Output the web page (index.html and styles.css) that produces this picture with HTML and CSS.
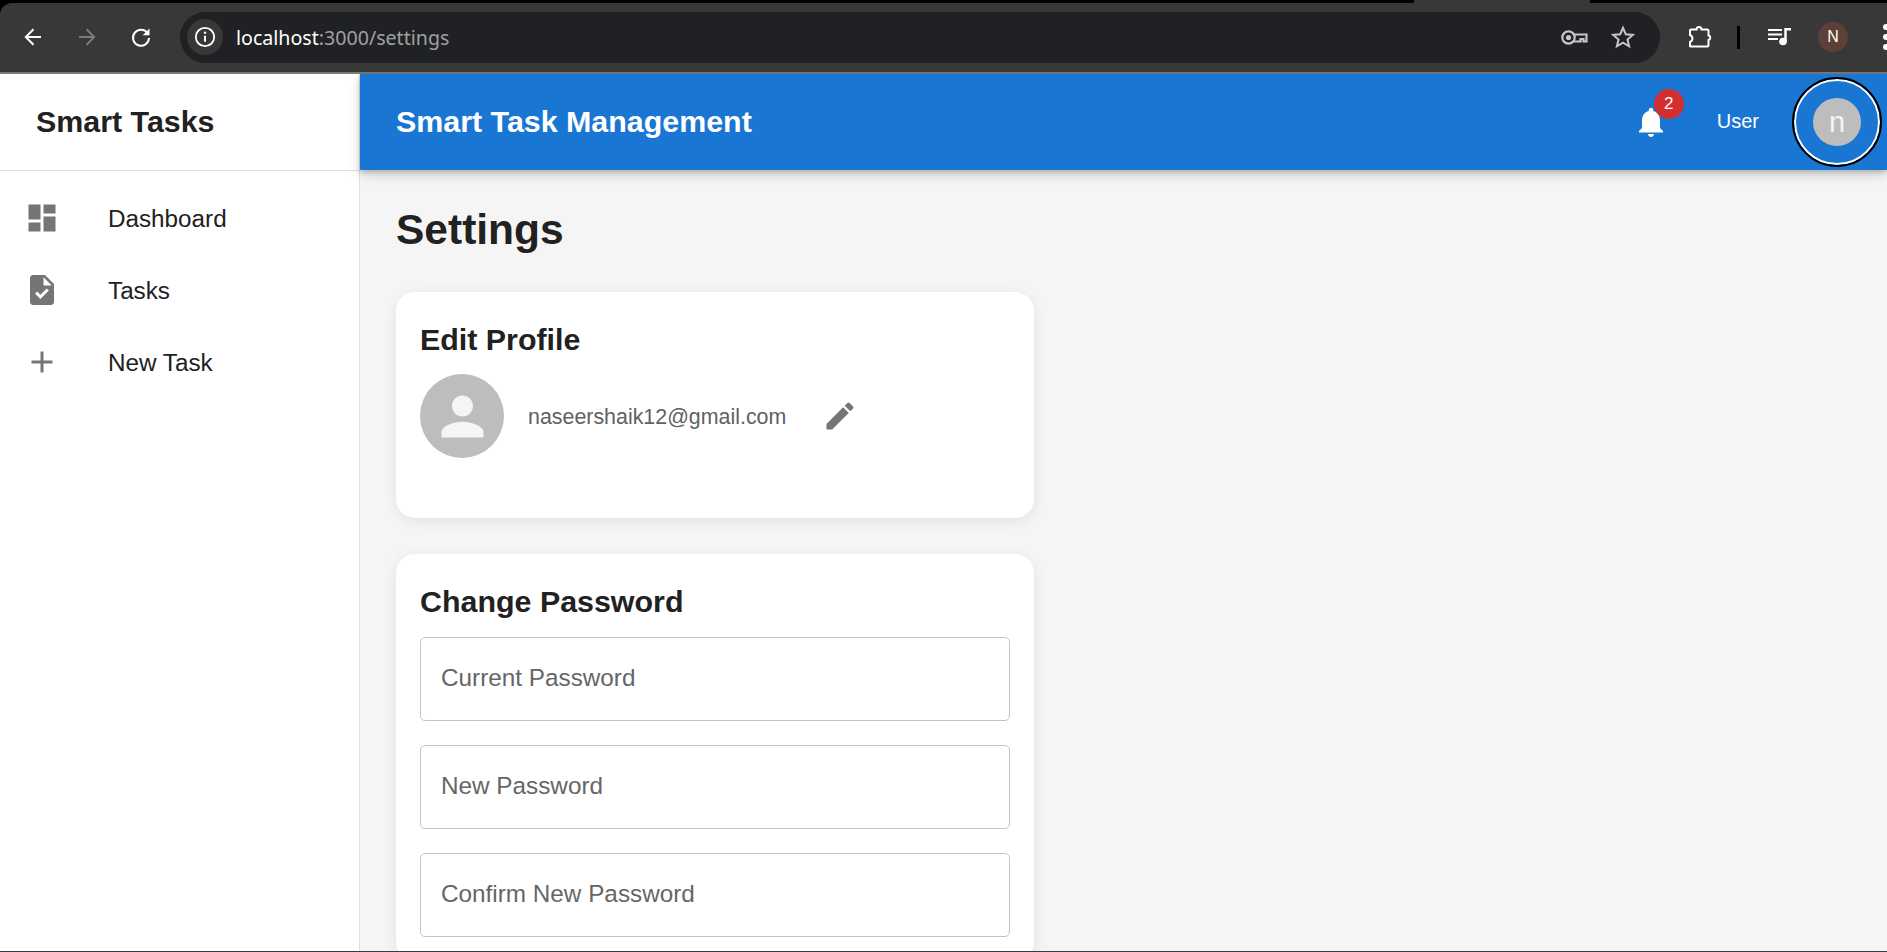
FILE: index.html
```html
<!DOCTYPE html>
<html lang="en">
<head>
  <meta charset="UTF-8">
  <title>Settings - Smart Tasks</title>
  <meta name="viewport" content="width=device-width, initial-scale=1.0">
  <link rel="stylesheet" href="styles.css">
</head>
<body>
  <div class="tab-strip"><div class="tab-gap"></div></div>

  <div class="toolbar">
    <svg class="nav-icon" width="24" height="24" viewBox="0 0 24 24"><path d="M20 12H5M12.5 4.2 4.8 12l7.700 7.800" fill="none" stroke="#fff" stroke-width="2"/></svg>
    <svg class="nav-icon" width="24" height="24" viewBox="0 0 24 24"><path d="M4 12h15M11.500 4.200l7.700 7.800-7.700 7.800" fill="none" stroke="#7b7b7b" stroke-width="2"/></svg>
    <svg class="nav-icon" width="24" height="24" viewBox="0 0 24 24"><path d="M18.600 8.200A8 8 0 1 0 20 13" fill="none" stroke="#fff" stroke-width="2"/><path d="M20.500 3.500v6.800h-6.800z" fill="#fff"/></svg>

    <div class="url-bar">
      <div class="site-chip">
        <svg width="22" height="22" viewBox="0 0 22 22"><circle cx="11" cy="11" r="9.200" fill="none" stroke="#fff" stroke-width="1.800"/><path d="M11 9.800v6" stroke="#fff" stroke-width="2"/><circle cx="11" cy="6.800" r="1.200" fill="#fff"/></svg>
      </div>
      <span class="url-host">localhost</span><span class="url-path">:3000/settings</span>
      <svg class="key-icon" width="27" height="15" viewBox="0 0 27 15"><path d="M12.600 4.500H25.500v7h-3V9h-3v2.500h-7" fill="none" stroke="#c7c7c7" stroke-width="2.200"/><circle cx="7.500" cy="7.500" r="6.200" fill="#202124" stroke="#c7c7c7" stroke-width="2.200"/><circle cx="7.500" cy="7.500" r="2.600" fill="#c7c7c7"/></svg>
      <svg class="star-icon" width="24" height="24" viewBox="0 0 24 24"><path d="M12 2.800l2.800 6.400 7 .7-5.300 4.600 1.600 6.800-6.100-3.600-6.100 3.600 1.600-6.800-5.300-4.600 7-.7z" fill="none" stroke="#c7c7c7" stroke-width="2"/></svg>
    </div>

    <svg class="ext-icon" width="24" height="24" viewBox="0 0 24 24"><path d="M3 4.500h5.500a2.500 2.500 0 0 1 5 0H19a1.500 1.500 0 0 1 1.500 1.500v4.500a2.300 2.300 0 0 1 0 4.500v5a1.500 1.500 0 0 1-1.500 1.500H3.500A1.500 1.500 0 0 1 2 21v-4a4 4 0 0 0 2.500-3.500A4 4 0 0 0 2 10V5.500A1 1 0 0 1 3 4.500z" fill="none" stroke="#fff" stroke-width="2"/></svg>
    <div class="tool-divider"></div>
    <svg class="queue-icon" width="24" height="18" viewBox="0 0 24 18"><path d="M0 2h14M0 6.500h14M0 11h10" stroke="#fff" stroke-width="2"/><path d="M17.500 14V1.200H23" fill="none" stroke="#fff" stroke-width="2.500"/><circle cx="15" cy="13.500" r="3.800" fill="#fff"/></svg>
    <div class="profile-chip">N</div>
    <div class="tool-dots"><i></i><i></i><i></i></div>
  </div>

  <div class="app">
    <aside class="sidebar">
      <div class="sidebar-head">Smart Tasks</div>
      <nav class="side-nav">
        <a class="side-link">
          <svg width="36" height="36" viewBox="0 0 24 24"><path d="M3 13h8V3H3v10zm0 8h8v-6H3v6zm10 0h8V11h-8v10zm0-18v6h8V3h-8z"/></svg>
          <span>Dashboard</span>
        </a>
        <a class="side-link">
          <svg width="36" height="36" viewBox="0 0 24 24"><path d="M14 2H6c-1.100 0-2 .9-2 2v16c0 1.100.9 2 2 2h12c1.100 0 2-.9 2-2V8l-6-6zm-3.060 16L7.400 14.460l1.410-1.410 2.120 2.120 4.240-4.240 1.410 1.410L10.940 18zM13 9V3.500L18.500 9H13z"/></svg>
          <span>Tasks</span>
        </a>
        <a class="side-link">
          <svg width="36" height="36" viewBox="0 0 24 24"><path d="M19 13h-6v6h-2v-6H5v-2h6V5h2v6h6v2z"/></svg>
          <span>New Task</span>
        </a>
      </nav>
    </aside>

    <div class="page">
      <header class="app-bar">
        <div class="app-title">Smart Task Management</div>
        <div class="bell">
          <svg width="36" height="36" viewBox="0 0 24 24"><path d="M12 22c1.100 0 2-.9 2-2h-4c0 1.100.9 2 2 2zm6-6v-5c0-3.070-1.630-5.640-4.500-6.320V4c0-.83-.67-1.500-1.500-1.500s-1.500.67-1.500 1.500v.68C7.640 5.360 6 7.920 6 11v5l-2 2v1h16v-1l-2-2z" fill="#fff"/></svg>
          <span class="bell-badge">2</span>
        </div>
        <span class="bar-user">User</span>
        <div class="bar-avatar-ring"><div class="bar-avatar">n</div></div>
      </header>

      <main class="content">
        <h1 class="page-title">Settings</h1>

        <section class="card">
          <h2 class="card-title">Edit Profile</h2>
          <div class="profile-row">
            <div class="profile-avatar">
              <svg width="63" height="63" viewBox="0 0 24 24"><path d="M12 12c2.210 0 4-1.790 4-4s-1.790-4-4-4-4 1.790-4 4 1.790 4 4 4zm0 2c-2.670 0-8 1.340-8 4v2h16v-2c0-2.660-5.330-4-8-4z" fill="#f5f5f5"/></svg>
            </div>
            <span class="profile-email">naseershaik12@gmail.com</span>
            <svg class="edit-icon" width="36" height="36" viewBox="0 0 24 24"><path d="M3 17.250V21h3.750L17.810 9.940l-3.750-3.750L3 17.250zM20.710 7.040c.39-.39.39-1.020 0-1.410l-2.340-2.340a.996.996 0 0 0-1.410 0l-1.830 1.830 3.750 3.750 1.830-1.830z"/></svg>
          </div>
        </section>

        <section class="card">
          <h2 class="card-title">Change Password</h2>
          <form class="pass-form">
            <input type="password" class="pass-input" placeholder="Current Password">
            <input type="password" class="pass-input" placeholder="New Password">
            <input type="password" class="pass-input" placeholder="Confirm New Password">
          </form>
        </section>
      </main>
    </div>
  </div>

  <div class="taskbar-edge"></div>
</body>
</html>
```

FILE: styles.css
```css
* {
  box-sizing: border-box;
}
html, body {
  height: 100%;
}
body {
  margin: 0;
  display: flex;
  flex-direction: column;
  overflow: hidden;
  background: #000;
  font-family: "Liberation Sans", Arial, sans-serif;
  color: #212121;
}

/* browser frame */
.tab-strip {
  height: 3px;
  flex: none;
}
.tab-gap {
  width: 176px;
  height: 3px;
  margin-left: 1414px;
  background: #383838;
}
.toolbar {
  height: 71px;
  flex: none;
  display: flex;
  align-items: center;
  padding: 0 0 1px 21px;
  background: #383838;
  border-bottom: 2px solid #7a7a7a;
  border-top-left-radius: 12px;
  overflow: hidden;
}
.nav-icon {
  flex: none;
  margin-right: 30px;
}
.url-bar {
  width: 1480px;
  height: 51px;
  flex: none;
  margin-left: -3px;
  display: flex;
  align-items: center;
  padding: 0 25px 0 7px;
  border-radius: 26px;
  background: #202124;
  font-family: "Noto Sans", sans-serif;
  font-size: 19.6px;
}
.site-chip {
  width: 36px;
  height: 36px;
  margin-right: 13px;
  display: flex;
  align-items: center;
  justify-content: center;
  border-radius: 50%;
  background: #383838;
}
.url-host {
  color: #fff;
}
.url-path {
  color: #a0a0a0;
}
.key-icon {
  margin-left: auto;
  margin-right: 23px;
}
.ext-icon {
  flex: none;
  margin-left: 28px;
}
.tool-divider {
  width: 3px;
  height: 23px;
  flex: none;
  margin-left: 25px;
  background: #000;
}
.queue-icon {
  flex: none;
  margin-left: 28px;
}
.profile-chip {
  width: 30px;
  height: 30px;
  flex: none;
  margin-left: 26px;
  display: flex;
  align-items: center;
  justify-content: center;
  border-radius: 50%;
  background: #5d4037;
  color: #fff;
  font-size: 16px;
}
.tool-dots {
  flex: none;
  margin-left: 35px;
  display: flex;
  flex-direction: column;
  gap: 4px;
}
.tool-dots i {
  display: block;
  width: 6px;
  height: 6px;
  border-radius: 50%;
  background: #fff;
}

/* app */
.app {
  flex: 1;
  min-height: 0;
  display: flex;
  background: #f5f5f5;
}
.sidebar {
  width: 360px;
  flex: none;
  background: #fff;
  border-right: 1px solid #e0e0e0;
}
.sidebar-head {
  height: 97px;
  padding: 0 0 2px 36px;
  display: flex;
  align-items: center;
  border-bottom: 1px solid #e0e0e0;
  font-size: 30.4px;
  font-weight: bold;
}
.side-nav {
  padding-top: 11px;
}
.side-link {
  height: 72px;
  display: flex;
  align-items: center;
  padding-left: 24px;
  font-size: 24.25px;
}
.side-link span {
  padding-top: 2px;
}
.side-link svg {
  flex: none;
  margin-right: 48px;
  fill: #757575;
}

.page {
  flex: 1;
  min-width: 0;
  display: flex;
  flex-direction: column;
}
.app-bar {
  height: 96px;
  flex: none;
  position: relative;
  display: flex;
  align-items: center;
  padding-left: 36px;
  background: #1976d2;
  color: #fff;
  box-shadow: 0 2px 5px rgba(0,0,0,.2), 0 5px 12px rgba(0,0,0,.14);
}
.app-title {
  padding-bottom: 2px;
  font-size: 30.4px;
  font-weight: bold;
}
.bell {
  position: relative;
  margin-left: auto;
  display: flex;
}
.bell-badge {
  position: absolute;
  top: -15px;
  right: -15px;
  width: 30px;
  height: 30px;
  display: flex;
  align-items: center;
  justify-content: center;
  border-radius: 50%;
  background: #d32f2f;
  font-size: 17px;
  font-weight: 500;
}
.bar-user {
  margin-left: 48px;
  padding-bottom: 2px;
  font-size: 20px;
}
.bar-avatar-ring {
  width: 86px;
  height: 86px;
  margin: 0 7px 0 35px;
  display: flex;
  align-items: center;
  justify-content: center;
  border-radius: 50%;
  border: 2px solid #fff;
  outline: 2px solid #000;
}
.bar-avatar {
  width: 48px;
  height: 48px;
  display: flex;
  align-items: center;
  justify-content: center;
  border-radius: 50%;
  background: #bdbdbd;
  color: #f5f5f5;
  font-size: 29px;
}

.content {
  flex: 1;
  min-height: 0;
  overflow: hidden;
  padding: 36px 36px 0;
}
.page-title {
  margin: 0 0 38px;
  font-size: 42.5px;
  line-height: 48px;
  font-weight: bold;
}
.card {
  width: 638px;
  margin-bottom: 36px;
  padding: 24px;
  border-radius: 19px;
  background: #fff;
  box-shadow: 0 3px 14px rgba(0,0,0,.08);
}
.card-title {
  margin: 0 0 12px;
  font-size: 30.4px;
  line-height: 46px;
  font-weight: bold;
}
.profile-row {
  display: flex;
  align-items: center;
  margin-bottom: 36px;
}
.profile-avatar {
  width: 84px;
  height: 84px;
  flex: none;
  display: flex;
  align-items: center;
  justify-content: center;
  border-radius: 50%;
  background: #bdbdbd;
}
.profile-email {
  margin-left: 24px;
  padding-top: 2px;
  font-size: 21.4px;
  color: #616161;
}
.edit-icon {
  margin-left: 36px;
  fill: #757575;
}
.pass-form {
  display: flex;
  flex-direction: column;
  gap: 24px;
  padding-top: 1px;
}
.pass-input {
  width: 100%;
  height: 84px;
  padding: 0 20px 2px;
  border: 1px solid #c4c4c4;
  border-radius: 5px;
  font-family: inherit;
  font-size: 24.3px;
}
.pass-input::placeholder {
  color: #666;
  opacity: 1;
}

.taskbar-edge {
  height: 1px;
  flex: none;
  background: #2f3d48;
}
```
